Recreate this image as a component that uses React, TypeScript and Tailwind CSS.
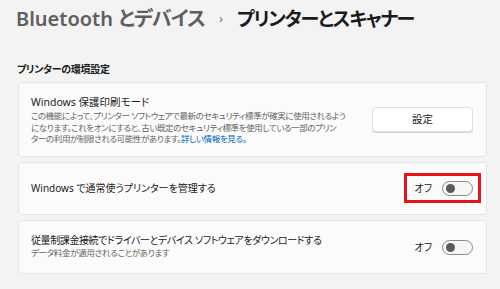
const Toggle = () => (
  <div className="flex h-[15px] w-[31px] shrink-0 items-center rounded-full border border-[#8a8a8a] bg-[#f6f6f6] pl-[3px]">
    <div className="h-[9px] w-[9px] rounded-full bg-[#5a5a5a]" />
  </div>
);

const OffSwitch = ({ marked }: { marked?: boolean }) => (
  <div className="relative flex items-center gap-[10px]">
    <span className="text-[10px] leading-[15px] text-[#1b1b1b]">オフ</span>
    <Toggle />
    {marked ? (
      <div className="absolute -left-[10px] -right-[8px] -top-[8px] -bottom-[7px] border-[3px] border-[#e8141c]" />
    ) : null}
  </div>
);

export default function App() {
  return (
    <div className="h-[289px] w-[500px] overflow-hidden bg-[#f3f3f3] font-['Noto_Sans','Noto_Sans_CJK_JP',sans-serif] [font-feature-settings:'palt'] text-[#1b1b1b]">
      <div className="flex items-center pl-[16px] pt-[5px] text-[20px] font-semibold leading-[28px]">
        <span className="text-[#5f5f5f]">Bluetooth <span className="tracking-[-0.9px]">とデバイス</span></span>
        <span className="mx-[14px] text-[12px] font-normal text-[#6b6b6b]">›</span>
        <span className="text-[19px] tracking-[-1.2px]">プリンターとスキャナー</span>
      </div>

      <div className="pl-[17px] pt-[29px] text-[10px] font-semibold leading-[14px] tracking-[-0.3px]">プリンターの環境設定</div>

      <div className="ml-[18px] mr-[13px] mt-[6px] flex flex-col gap-[5px]">
        <div className="flex h-[75px] items-center justify-between rounded-[4px] border border-[#e5e5e5] bg-[#fbfbfb] pl-[12px] pr-[13px]">
          <div>
            <div className="text-[10.5px] leading-[16px]">Windows 保護印刷モード</div>
            <div className="whitespace-nowrap text-[8.5px] leading-[11.5px] tracking-[-0.4px] text-[#646464]">
              この機能によって、プリンター ソフトウェアで最新のセキュリティ標準が確実に使用されるよう
              <br />
              になります。これをオンにすると、古い既定のセキュリティ標準を使用している一部のプリン
              <br />
              ターの利用が制限される可能性があります。
              <span className="text-[#005fb8]">詳しい情報を見る。</span>
            </div>
          </div>
          <button className="h-[25px] w-[101px] shrink-0 rounded-[4px] border border-[#e0e0e0] bg-white text-[10.5px] text-[#1b1b1b] shadow-[0_1px_0_#d4d4d4]">
            設定
          </button>
        </div>

        <div className="flex h-[53px] items-center justify-between rounded-[4px] border border-[#e5e5e5] bg-[#fbfbfb] pl-[12px] pr-[13px]">
          <span className="text-[10px]">Windows で通常使うプリンターを管理する</span>
          <OffSwitch marked />
        </div>

        <div className="flex h-[54px] items-center justify-between rounded-[4px] border border-[#e5e5e5] bg-[#fbfbfb] pl-[12px] pr-[13px]">
          <div className="pb-[2px]">
            <div className="text-[10px] leading-[14px] tracking-[-0.4px]">従量制課金接続でドライバーとデバイス ソフトウェアをダウンロードする</div>
            <div className="text-[8.5px] leading-[12px] tracking-[-0.3px] text-[#646464]">データ料金が適用されることがあります</div>
          </div>
          <OffSwitch />
        </div>
      </div>
    </div>
  );
}
